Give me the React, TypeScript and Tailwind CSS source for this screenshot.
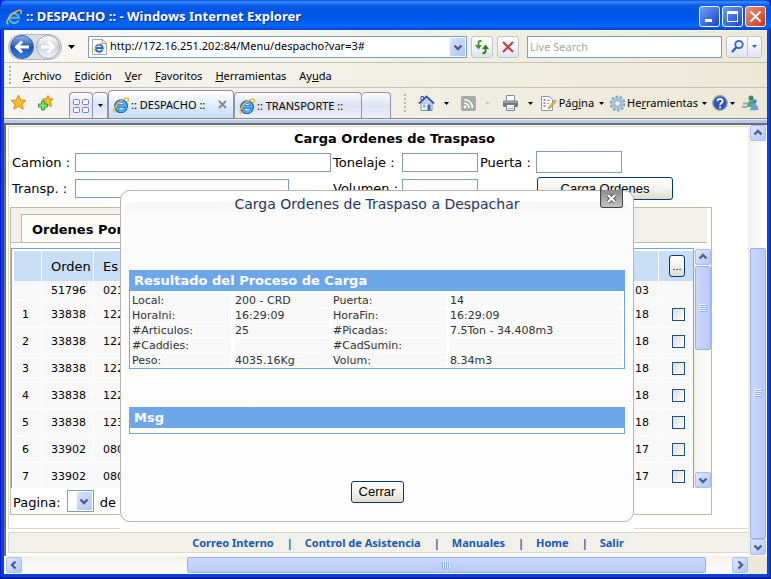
import type { ReactNode } from "react";

const UI = "font-['Noto_Sans',sans-serif]";

function IeLogo({ size = 16 }: { size?: number }) {
  return (
    <svg width={size} height={size} viewBox="0 0 16 16" className="shrink-0" aria-hidden="true">
      <path d="M13 11A5.200 5.200 0 1 1 13.300 9H4.500" fill="none" stroke="#1b63c4" strokeWidth="3.600" />
      <path d="M12.600 11A4.800 4.800 0 1 1 12.900 8.800H4.500" fill="none" stroke="#4fb2f3" strokeWidth="2" />
      <path d="M2.600 14.800C.2 15.400.4 12 3.600 8 7.200 3.500 12.500.4 14.700 1.400 15.700 2 15.400 3.400 14.600 4.800" fill="none" stroke="#f3b52c" strokeWidth="1.500" />
    </svg>
  );
}

function Caret({ color = "#000" }: { color?: string }) {
  return (
    <svg width="5" height="3" viewBox="0 0 5 3" className="shrink-0" aria-hidden="true">
      <path d="M0 0h5L2.500 3z" fill={color} />
    </svg>
  );
}

function Chevron({ dir }: { dir: "up" | "down" | "left" | "right" }) {
  const d = {
    up: "M1.500 6.500 5 3l3.500 3.500",
    down: "M1.500 3.500 5 7l3.500-3.500",
    left: "M6.500 1.500 3 5l3.500 3.500",
    right: "M3.500 1.500 7 5 3.500 8.500",
  }[dir];
  return (
    <svg width="10" height="10" viewBox="0 0 10 10" aria-hidden="true">
      <path d={d} fill="none" stroke="#4d6185" strokeWidth="2.400" />
    </svg>
  );
}

function ScrollButton({ dir, label }: { dir: "up" | "down" | "left" | "right"; label: string }) {
  return (
    <button
      type="button"
      aria-label={label}
      className="flex size-4 shrink-0 items-center justify-center rounded-xs border border-[#a9bff0] bg-linear-to-br from-[#dfe8ff] to-[#b2c6f9]"
    >
      <Chevron dir={dir} />
    </button>
  );
}

function Grip({ vertical = false }: { vertical?: boolean }) {
  return (
    <svg width="8" height="8" viewBox="0 0 8 8" className={vertical ? "rotate-90" : ""} aria-hidden="true">
      <path d="M0 .5h7M0 2.500h7M0 4.500h7M0 6.500h7" stroke="#eef4fe" />
      <path d="M1 1.500h7M1 3.500h7M1 5.500h7M1 7.500h7" stroke="#8cb0f8" />
    </svg>
  );
}

function Handle() {
  return (
    <span className="flex w-1 shrink-0 flex-col gap-[2px]" aria-hidden="true">
      {[0, 1, 2, 3, 4].map((i) => (
        <span key={i} className="size-[2px] bg-[#b5b3a6]" />
      ))}
    </span>
  );
}

function TitleBar() {
  const base = "flex size-[21px] items-center justify-center rounded-[3px] border border-white";
  return (
    <header className="flex h-[30px] shrink-0 items-center rounded-t-lg bg-[linear-gradient(#0a4fd0_0,#3a8cff_2px,#0a5ff0_5px,#0054e3_10px,#0058ec_18px,#0068ff_26px,#0040c8_100%)] pt-[3px] pr-[5px] pl-1.5">
      <IeLogo />
      <h1 className={`ml-1 flex-1 text-[13px] font-bold whitespace-nowrap text-white [text-shadow:1px_1px_0_#0b2a80] ${UI}`}>
        :: DESPACHO :: - Windows Internet Explorer
      </h1>
      <div className="flex gap-[2px]">
        <button type="button" aria-label="Minimizar" className={`${base} bg-linear-to-br from-[#6f9cf5] to-[#1746c8]`}>
          <svg width="13" height="13" viewBox="0 0 13 13"><path d="M2 9h7v3H2z" fill="#fff" /></svg>
        </button>
        <button type="button" aria-label="Maximizar" className={`${base} bg-linear-to-br from-[#6f9cf5] to-[#1746c8]`}>
          <svg width="13" height="13" viewBox="0 0 13 13"><path d="M1 1h11v11H1zM2 4h9v7H2z" fill="#fff" fillRule="evenodd" /></svg>
        </button>
        <button type="button" aria-label="Cerrar ventana" className={`${base} bg-linear-to-br from-[#f09070] to-[#c83208]`}>
          <svg width="13" height="13" viewBox="0 0 13 13"><path d="m1.500 1.500 10 10M11.500 1.500l-10 10" stroke="#fff" strokeWidth="2" /></svg>
        </button>
      </div>
    </header>
  );
}

function NavBar() {
  const btn = "flex h-[22px] items-center justify-center border border-[#c3c5cf] bg-linear-to-b from-white via-[#f2f4fa] to-[#dfe3ef]";
  return (
    <div className="flex h-8 shrink-0 items-center border-t border-[#fbfaf6] bg-linear-to-r from-[#f8f8f6] to-[#ece9d8] pr-[5px] pl-1">
      <div className="flex h-[26px] w-[54px] shrink-0 items-center justify-between rounded-full border border-[#b4b7bd] bg-[#dadde2] px-px">
        <button type="button" aria-label="Atrás" className="flex size-6 items-center justify-center rounded-full border border-[#3a5fa8] bg-linear-to-b from-[#8fb4ea] via-[#1f52b8] to-[#2f86e0]">
          <svg width="16" height="16" viewBox="0 0 16 16"><path d="M15 8H3M8 2.500 2.500 8 8 13.500" fill="none" stroke="#fff" strokeWidth="3" /></svg>
        </button>
        <button type="button" aria-label="Adelante" className="flex size-6 items-center justify-center rounded-full border border-[#a5adb9] bg-linear-to-b from-white via-[#cdd3dc] to-[#f1f4f8]">
          <svg width="16" height="16" viewBox="0 0 16 16"><path d="M1 8h12M8 2.500 13.500 8 8 13.500" fill="none" stroke="#fff" strokeWidth="3" /></svg>
        </button>
      </div>
      <button type="button" aria-label="Historial" className="flex w-[26px] shrink-0 justify-center pr-2">
        <svg width="7" height="4" viewBox="0 0 7 4"><path d="M0 0h7L3.500 4z" /></svg>
      </button>
      <div className="flex h-[22px] min-w-0 flex-1 items-center border border-[#7f9db9] bg-white pr-px pl-[2px]">
        <svg width="17" height="18" viewBox="0 0 17 18" className="shrink-0" aria-hidden="true">
          <path d="M1.500 1.500h10l4 4v11h-14z" fill="#fdfdfd" stroke="#a7a7a7" />
          <path d="M11.500 1.500v4h4" fill="none" stroke="#a7a7a7" />
          <path d="M11.500 11.500A3.500 3.500 0 1 1 11.700 9.900H5.500" fill="none" stroke="#1c6fd0" strokeWidth="2" />
          <path d="M4 14C2.500 14 4 9.500 7 7.200 9.500 5.300 12.500 4.400 12.500 6" fill="none" stroke="#f0b429" />
        </svg>
        <input aria-label="Dirección" defaultValue="http://172.16.251.202:84/Menu/despacho?var=3#" className={`ml-[2px] min-w-0 flex-1 text-[11px] outline-none ${UI}`} />
        <button type="button" aria-label="Mostrar direcciones" className="flex h-[18px] w-[15px] items-center justify-center bg-linear-to-br from-[#d6e2fd] to-[#b3c7f5]">
          <Chevron dir="down" />
        </button>
      </div>
      <button type="button" aria-label="Actualizar" className={`${btn} ml-1 w-[22px] rounded-[3px]`}>
        <svg width="16" height="16" viewBox="0 0 16 16">
          <path d="M7.500 2H6Q4.500 2 4.500 4v3" fill="none" stroke="#3b9a2e" strokeWidth="1.800" />
          <path d="M1 6h7L4.500 10.500z" fill="#3b9a2e" />
          <path d="M8.500 14H10Q11.500 14 11.500 12V9" fill="none" stroke="#2a7f20" strokeWidth="1.800" />
          <path d="M8 10h7L11.500 5.500z" fill="#2a7f20" />
        </svg>
      </button>
      <button type="button" aria-label="Detener" className={`${btn} ml-1 w-[22px] rounded-[3px]`}>
        <svg width="14" height="14" viewBox="0 0 14 14"><path d="m2 2 10 10M12 2 2 12" stroke="#c83a3a" strokeWidth="2" /></svg>
      </button>
      <input aria-label="Buscar" placeholder="Live Search" className={`ml-2 h-[22px] w-[195px] border border-[#7f9db9] bg-white px-[2px] text-[11px] outline-none placeholder:text-[#aca899] ${UI}`} />
      <button type="button" aria-label="Iniciar búsqueda" className={`${btn} ml-1 w-[22px] rounded-l-[3px]`}>
        <svg width="15" height="15" viewBox="0 0 15 15"><circle cx="9" cy="5.500" r="3.700" fill="#eaf2ff" stroke="#2c62d6" strokeWidth="1.800" /><path d="M6.300 8.300 2 13" stroke="#2c62d6" strokeWidth="2.400" /></svg>
      </button>
      <button type="button" aria-label="Opciones de búsqueda" className={`${btn} w-[14px] rounded-r-[3px] border-l-0`}>
        <Caret color="#2c62d6" />
      </button>
    </div>
  );
}

const MENUS: [string, string, string][] = [
  ["", "A", "rchivo"],
  ["", "E", "dición"],
  ["", "V", "er"],
  ["", "F", "avoritos"],
  ["", "H", "erramientas"],
  ["Ay", "u", "da"],
];

function MenuBar() {
  return (
    <nav className="flex h-[26px] shrink-0 items-center border-y border-y-[#c5c2b5] bg-linear-to-r from-[#f6f5f2] to-[#ece9d8] pl-[5px]">
      <Handle />
      <div className={`ml-[10px] flex gap-[13px] pt-[2px] text-[11px] ${UI}`}>
        {MENUS.map(([pre, key, post]) => (
          <button type="button" key={post} className="whitespace-nowrap">
            {pre}
            <u>{key}</u>
            {post}
          </button>
        ))}
      </div>
    </nav>
  );
}

function Star({ small = false }: { small?: boolean }) {
  return (
    <svg width="17" height="17" viewBox="0 0 17 17" aria-hidden="true">
      <path
        d={small ? "m11 1.500 1.500 3.300 3.500.2-2.600 2.700 1 4.800-3.400-1.900-4 1.700 1-4L5.500 5l3.700-.3z" : "m8.500 1 2.200 5 5.300.4-4.100 3.500 1.300 5.300-4.700-2.900-4.700 2.900 1.300-5.300L1 6.400 6.300 6z"}
        fill="#fdbb30"
        stroke="#d98a12"
      />
      {small && <path d="M4.500 7h3v3h3v3h-3v3h-3v-3h-3v-3h3z" fill="#8fdc6c" stroke="#2f9a2a" />}
    </svg>
  );
}

function Tool({ children, label, color }: { children: ReactNode; label: string; color?: string }) {
  return (
    <button type="button" aria-label={label} className="flex items-center gap-[9px]">
      {children}
      <Caret color={color} />
    </button>
  );
}

function TabRow() {
  const tab = "flex items-center rounded-t border border-b-0 border-[#8f95a8]";
  const idle = "bg-linear-to-b from-[#fafbfe] via-[#dfe3f1] via-50% to-[#eef0f8]";
  return (
    <div className={`flex h-[31px] shrink-0 items-end justify-between border-b border-[#8f8d82] bg-linear-to-r from-[#f6f5f2] to-[#ece9d8] pr-2 pl-1.5 text-[11px] ${UI}`}>
      <div className="flex items-end">
        <div className="flex gap-[10px] pb-[7px]">
          <button type="button" aria-label="Centro de favoritos"><Star /></button>
          <button type="button" aria-label="Agregar a favoritos"><Star small /></button>
        </div>
        <button type="button" aria-label="Pestañas rápidas" className={`${tab} ${idle} ml-[15px] h-[26px] w-6 justify-center`}>
          <svg width="16" height="14" viewBox="0 0 16 14"><g fill="#f4f5fb" stroke="#7c82a0"><rect x=".5" y=".5" width="6" height="5" rx="1" /><rect x="9.500" y=".5" width="6" height="5" rx="1" /><rect x=".5" y="8.500" width="6" height="5" rx="1" /><rect x="9.500" y="8.500" width="6" height="5" rx="1" /></g></svg>
        </button>
        <button type="button" aria-label="Lista de pestañas" className={`${tab} ${idle} h-[26px] w-[15px] justify-center border-l-0`}>
          <Caret />
        </button>
        <div className={`${tab} h-7 w-[126px] bg-linear-to-b from-white via-[#e2edfb] to-[#c5dcf8] pr-1.5 pl-1`}>
          <IeLogo />
          <span className="ml-[2px] flex-1 pt-px whitespace-nowrap">:: DESPACHO ::</span>
          <button type="button" aria-label="Cerrar pestaña"><svg width="9" height="9" viewBox="0 0 9 9"><path d="m1 1 7 7M8 1 1 8" stroke="#8a8a8a" strokeWidth="2" /></svg></button>
        </div>
        <div className={`${tab} ${idle} h-[26px] w-[128px] pl-1`}>
          <IeLogo />
          <span className="ml-[2px] pt-px whitespace-nowrap">:: TRANSPORTE ::</span>
        </div>
        <button type="button" aria-label="Nueva pestaña" className={`${tab} ${idle} h-[26px] w-[29px] border-l-0`} />
      </div>
      <div className="flex h-[30px] items-center">
        <Handle />
        <div className="ml-[10px] flex items-center gap-3">
          <Tool label="Inicio">
            <svg width="17" height="17" viewBox="0 0 17 17"><path d="M3 8h11v7.500H3z" fill="#e8eefa" stroke="#7b8bab" /><path d="M3 1.500h2.500V5H3z" fill="#fff" stroke="#3b51b5" /><path d="M1 8.500 8.500 1.500 16 8.500" fill="#c7d3ea" stroke="#3b51b5" strokeWidth="1.800" /><path d="M9.500 9.500h3v6h-3z" fill="#356bb5" /><path d="M5 9.500h2.500v3H5z" fill="#9ab" /></svg>
          </Tool>
          <Tool label="Fuentes" color="#c9c6ba">
            <svg width="15" height="15" viewBox="0 0 15 15"><rect width="15" height="15" rx="2" fill="#a9a9a6" /><path d="M3 7a5 5 0 0 1 5 5M3 3.500A8.500 8.500 0 0 1 11.500 12" fill="none" stroke="#fff" strokeWidth="1.600" /><circle cx="4" cy="11" r="1.400" fill="#fff" /></svg>
          </Tool>
          <Tool label="Imprimir">
            <svg width="17" height="16" viewBox="0 0 17 16"><path d="M4.500.5h8V7h-8z" fill="#fff" stroke="#8a8f98" /><rect x="1" y="5.500" width="15" height="6.500" rx="1.500" fill="#6f7680" /><path d="M2 7h13" stroke="#c0c5cc" /><path d="M4.500 9.500h8v6h-8z" fill="#f3f5f8" stroke="#7a8088" /><path d="M6 13.500h5" stroke="#9ab0cc" /></svg>
          </Tool>
        </div>
        <button type="button" className="ml-[7px] flex items-center">
          <svg width="17" height="17" viewBox="0 0 17 17"><path d="M1.500 1.500h8l3 3v11h-11z" fill="#fff" stroke="#8d97a8" /><path d="M3.500 5h2M3.500 8h2M3.500 11h2" stroke="#5b7fb8" strokeWidth="1.500" /><path d="M7 5.500h3M7 8.500h2" stroke="#9aa" /><path d="m15 5-6 6.500-.7 2 2-.7L16 6.500z" fill="#f5c861" stroke="#b5762b" strokeWidth=".8" /></svg>
          <span className="ml-[2px] pt-px">Pág<u>i</u>na</span>
          <span className="ml-[5px]"><Caret /></span>
        </button>
        <button type="button" className="ml-[5px] flex items-center">
          <svg width="17" height="17" viewBox="0 0 17 17"><circle cx="8.500" cy="8.500" r="6.800" fill="none" stroke="#7f9dbd" strokeWidth="2.200" strokeDasharray="2.600 1.670" /><circle cx="8.500" cy="8.500" r="4.600" fill="none" stroke="#a4c0dc" strokeWidth="3.200" /><circle cx="8.500" cy="8.500" r="2.800" fill="#f3f3ee" stroke="#7795b5" strokeWidth=".8" /></svg>
          <span className="ml-px pt-px">He<u>r</u>ramientas</span>
          <span className="ml-1"><Caret /></span>
        </button>
        <button type="button" aria-label="Ayuda" className="ml-[5px] flex items-center gap-[2px]">
          <svg width="16" height="16" viewBox="0 0 16 16"><circle cx="8" cy="8" r="7.200" fill="#2b59b8" stroke="#8e9bb8" strokeWidth="1.400" /><path d="M5.500 6.300C5.500 3.200 10.600 3.200 10.600 6.200 10.600 8 8.100 8 8.100 10M8.100 11.200v2" fill="none" stroke="#fff" strokeWidth="1.800" /></svg>
          <Caret />
        </button>
        <button type="button" aria-label="Messenger" className="ml-[7px]">
          <svg width="17" height="16" viewBox="0 0 17 16"><circle cx="9" cy="3" r="2.500" fill="#3d8a5c" /><path d="M5 12c0-9 8-9 8.500 0z" fill="#5ba47a" /><circle cx="12.500" cy="6.500" r="2.200" fill="#4f84c4" /><path d="M8 15.500c1-9 8-8 8.500-.5z" fill="#6f9fd6" /><path d="M1 8.500h5M0 12h5" stroke="#8fa8bd" strokeWidth="2" /></svg>
        </button>
      </div>
    </div>
  );
}

const field = "border border-[#7f9db9] bg-white px-1 outline-none";
const xpButton = "rounded-[3px] border border-[#003c74] bg-linear-to-b from-white via-[#f4f3ee] to-[#dedbd0] font-['Liberation_Sans',Arial,sans-serif]";

function LoadForm() {
  return (
    <form className="grid grid-cols-[63px_256px_71px_76px_58px_auto] items-center justify-start gap-y-1 pl-[3px] text-[13px]">
      <h2 className="col-span-6 h-5 pl-[282px] leading-6 font-bold">Carga Ordenes de Traspaso</h2>
      <label htmlFor="camion" className="pt-[2px]">Camion :</label>
      <input id="camion" className={`${field} h-[19px] w-full`} />
      <label htmlFor="tonelaje" className="pt-[2px] pl-[2px]">Tonelaje :</label>
      <input id="tonelaje" className={`${field} h-[19px] w-full`} />
      <label htmlFor="puerta" className="pt-[2px] pl-[2px] whitespace-nowrap">Puerta :</label>
      <input id="puerta" className={`${field} h-[22px] w-[86px]`} />
      <label htmlFor="transp">Transp. :</label>
      <input id="transp" className={`${field} h-[19px] w-[214px]`} />
      <label htmlFor="volumen" className="pl-[2px] whitespace-nowrap">Volumen :</label>
      <input id="volumen" className={`${field} h-[19px] w-full`} />
      <span />
      <button type="button" className={`${xpButton} ml-px h-[23px] w-[136px]`}>Carga Ordenes</button>
    </form>
  );
}

const ORDERS = [
  { n: "", orden: "51796", es: "021", dia: "03" },
  { n: "1", orden: "33838", es: "122", dia: "18" },
  { n: "2", orden: "33838", es: "122", dia: "18" },
  { n: "3", orden: "33838", es: "122", dia: "18" },
  { n: "4", orden: "33838", es: "122", dia: "18" },
  { n: "5", orden: "33838", es: "123", dia: "18" },
  { n: "6", orden: "33902", es: "080", dia: "17" },
  { n: "7", orden: "33902", es: "080", dia: "17" },
];

function OrdersPanel() {
  const cell = "border-r border-b border-white bg-[#f8f8f8] p-0 pt-[2px]";
  const head = "border-r border-white bg-[#c8def7] p-0 text-[13px] font-normal";
  return (
    <section className="mt-[7px] mr-9 ml-px border border-[#bdbaa8]">
      <div className="mr-1 h-[35px] border-b border-[#bdbaa8] bg-[#f1f0ea] pt-1.5 pl-[10px]">
        <h3 className="h-7 w-60 border-t border-l border-[#bdbaa8] bg-[#fcfcf8] pl-[10px] text-[13px] leading-[29px] font-bold">Ordenes Por</h3>
      </div>
      <div className="mt-[5px] flex h-60">
        <div className="flex-1 overflow-hidden border-x border-t border-[#6ea7e9] pt-[2px] pl-[2px]">
          <table className="w-full table-fixed border-separate border-spacing-0 text-[11px]">
            <colgroup>
              <col className="w-7" />
              <col className="w-[52px]" />
              <col />
              <col className="w-[34px]" />
              <col className="w-[34px]" />
            </colgroup>
            <thead>
              <tr className="h-[30px]">
                <th className={head} />
                <th className={`${head} pt-[2px] pl-[9px] text-left`}>Orden</th>
                <th className={`${head} border-r-0 pt-[2px] pl-[9px] text-left`}>Es</th>
                <th className={head} />
                <th className={`${head} border-r-0`}>
                  <button type="button" className={`${xpButton} ml-[2px] h-[22px] w-4 align-middle text-[11px]`}>...</button>
                </th>
              </tr>
            </thead>
            <tbody>
              {ORDERS.map((o) => (
                <tr key={o.n} className={o.n ? "h-[27px]" : "h-5"}>
                  <td className={`${cell} pr-1 text-center`}>{o.n}</td>
                  <td className={`${cell} pl-[9px]`}>{o.orden}</td>
                  <td className={`${cell} border-r-0 pl-[9px]`}>{o.es}</td>
                  <td className={`${cell} pr-[9px] text-right`}>{o.dia}</td>
                  <td className={`${cell} border-r-0 pl-1 text-center`}>
                    {o.n && (
                      <input
                        type="checkbox"
                        aria-label={`Orden ${o.n}`}
                        className="size-[13px] appearance-none border border-[#1c5180] bg-linear-to-br from-[#dcdcd7] to-white align-middle"
                      />
                    )}
                  </td>
                </tr>
              ))}
            </tbody>
          </table>
        </div>
        <div className="flex w-[17px] flex-col items-center bg-linear-to-r from-[#f3f1ec] to-white pt-px">
          <ScrollButton dir="up" label="Subir lista" />
          <div className="mt-px flex h-[84px] w-4 items-center justify-center rounded-xs border border-[#98b1e8] bg-linear-to-r from-[#cad8fe] to-[#b9cbfb]">
            <Grip />
          </div>
          <div className="flex-1" />
          <ScrollButton dir="down" label="Bajar lista" />
        </div>
      </div>
      <div className="flex h-[26px] items-center pl-[2px] text-[13px]">
        <label htmlFor="pagina" className="pt-1">Pagina:</label>
        <div className="relative ml-1.5">
          <select id="pagina" className="block h-[22px] w-[27px] appearance-none border border-[#7f9db9] bg-white" />
          <span className="pointer-events-none absolute top-[2px] right-[2px] flex h-[18px] w-[15px] items-center justify-center bg-linear-to-br from-[#d6e2fd] to-[#b3c7f5]">
            <Chevron dir="down" />
          </span>
        </div>
        <span className="ml-1.5 pt-1">de</span>
      </div>
    </section>
  );
}

const RESULT: [string, string, string, string][] = [
  ["Local:", "200 - CRD", "Puerta:", "14"],
  ["HoraIni:", "16:29:09", "HoraFin:", "16:29:09"],
  ["#Articulos:", "25", "#Picadas:", "7.5Ton - 34.408m3"],
  ["#Caddies:", "", "#CadSumin:", ""],
  ["Peso:", "4035.16Kg", "Volum:", "8.34m3"],
];

function ResultDialog() {
  return (
    <div className="absolute inset-x-0 top-[65px] mx-auto w-[514px] rounded-t-[10px] bg-white pb-2">
      <div role="dialog" aria-labelledby="dlg-title" className="relative rounded-[10px] border border-[#b4b4b4] px-2 pb-[18px]">
        <div className="absolute inset-x-px top-[11px] bottom-1.5 rounded-t-xl bg-[linear-gradient(#f5f5f5,#fcfcfc_14px,#fdfdfd)]" />
        <button
          type="button"
          aria-label="Cerrar"
          className="absolute -top-px right-[10px] flex h-[18px] w-[23px] items-center justify-center rounded-b-[3px] border border-t-0 border-[#444] bg-linear-to-b from-[#8a8a8a] to-[#c4c4c4]"
        >
          <svg width="11" height="11" viewBox="0 0 11 11"><path d="m2 2 7 7M9 2 2 9" stroke="#555" strokeWidth="4" /><path d="m2 2 7 7M9 2 2 9" stroke="#fff" strokeWidth="2.200" /></svg>
        </button>
        <div className="relative">
          <h2 id="dlg-title" className="h-[79px] text-center text-[14px] leading-[26px] text-[#1f3864]">
            Carga Ordenes de Traspaso a Despachar
          </h2>
          <div className="border border-t-0 border-[#6ea7e9] bg-white">
            <h3 className="-mx-px h-[21px] bg-[#6ea7e9] pl-[5px] text-[13px] leading-[21px] font-bold text-white">Resultado del Proceso de Carga</h3>
            <table className="mt-[2px] w-full table-fixed border-separate border-spacing-0 text-[11px] leading-[12px] text-[#333]">
              <colgroup>
                <col className="w-[103px]" />
                <col className="w-[98px]" />
                <col className="w-[117px]" />
                <col />
              </colgroup>
              <tbody>
                {RESULT.map((row) => (
                  <tr key={row[0]}>
                    {row.map((text, i) => (
                      <td key={i} className="h-[15px] border-x-2 border-b border-white bg-[#f8f8f8] p-0 pt-[2px]">{text}</td>
                    ))}
                  </tr>
                ))}
              </tbody>
            </table>
          </div>
          <div className="mt-[38px] border border-t-0 border-[#6ea7e9] bg-white pb-[5px]">
            <h3 className="-mx-px h-[21px] bg-[#6ea7e9] pl-[5px] text-[13px] leading-[21px] font-bold text-white">Msg</h3>
          </div>
          <div className="mt-[47px] flex justify-center">
            <button type="button" className={`${xpButton} h-[22px] w-[53px] text-[13px]`}>Cerrar</button>
          </div>
        </div>
      </div>
    </div>
  );
}

const LINKS = ["Correo Interno", "Control de Asistencia", "Manuales", "Home", "Salir"];

export default function App() {
  return (
    <div className="flex min-h-screen flex-col bg-[#0842dc] text-black shadow-[inset_0_-2px_0_#001ea0,inset_1px_0_0_#0019cf,inset_-1px_0_0_#001ea0]">
      <TitleBar />
      <div className="mx-1 mb-[5px] flex flex-1 flex-col bg-[#ece9d8]">
        <NavBar />
        <MenuBar />
        <TabRow />
        <div className="h-1 shrink-0 border-t border-[#e6ebfa] bg-[#b8c8f0]" />
        <div className="flex flex-1 border-t-2 border-l-2 border-t-[#716f64] border-l-[#716f64] bg-white font-['DejaVu_Sans',Verdana,sans-serif]">
          <div className="relative flex min-w-0 flex-1 flex-col">
            <main className="mt-px ml-[2px] border-y border-l border-[#dcd9c8] pb-[13px]">
              <LoadForm />
              <OrdersPanel />
            </main>
            <footer className={`mt-[3px] ml-[2px] flex h-[21px] items-center justify-center gap-[13px] border border-r-0 border-[#dcd9c8] bg-[#f1f0ea] pt-[2px] pl-[59px] text-[11px] font-bold text-[#1b57b5] ${UI}`}>
              {LINKS.map((l, i) => (
                <span key={l} className="flex gap-3 whitespace-nowrap">
                  {i > 0 && <span>|</span>}
                  <a href="#">{l}</a>
                </span>
              ))}
            </footer>
            <ResultDialog />
          </div>
          <div className="flex w-[19px] flex-col items-center border-l border-[#f0eadf] bg-linear-to-r from-[#f3f1ec] to-white">
            <ScrollButton dir="up" label="Subir" />
            <div className="flex-[107]" />
            <div className="flex w-4 flex-[290] items-center justify-center rounded-xs border border-[#98b1e8] bg-linear-to-r from-[#cad8fe] to-[#b9cbfb]">
              <Grip />
            </div>
            <ScrollButton dir="down" label="Bajar" />
            <div className="h-px" />
          </div>
        </div>
        <div className="flex h-[18px] shrink-0 bg-white pl-[2px]">
          <div className="flex flex-1 items-center bg-linear-to-b from-[#f3f1ec] to-white">
            <ScrollButton dir="left" label="Izquierda" />
            <div className="flex-[165]" />
            <div className="flex h-4 flex-[518] items-center justify-center rounded-xs border border-[#98b1e8] bg-linear-to-b from-[#cad8fe] to-[#b9cbfb]">
              <Grip vertical />
            </div>
            <div className="flex-[26]" />
            <ScrollButton dir="right" label="Derecha" />
          </div>
          <div className="w-[19px] bg-[#ece9d8]" />
        </div>
      </div>
    </div>
  );
}
